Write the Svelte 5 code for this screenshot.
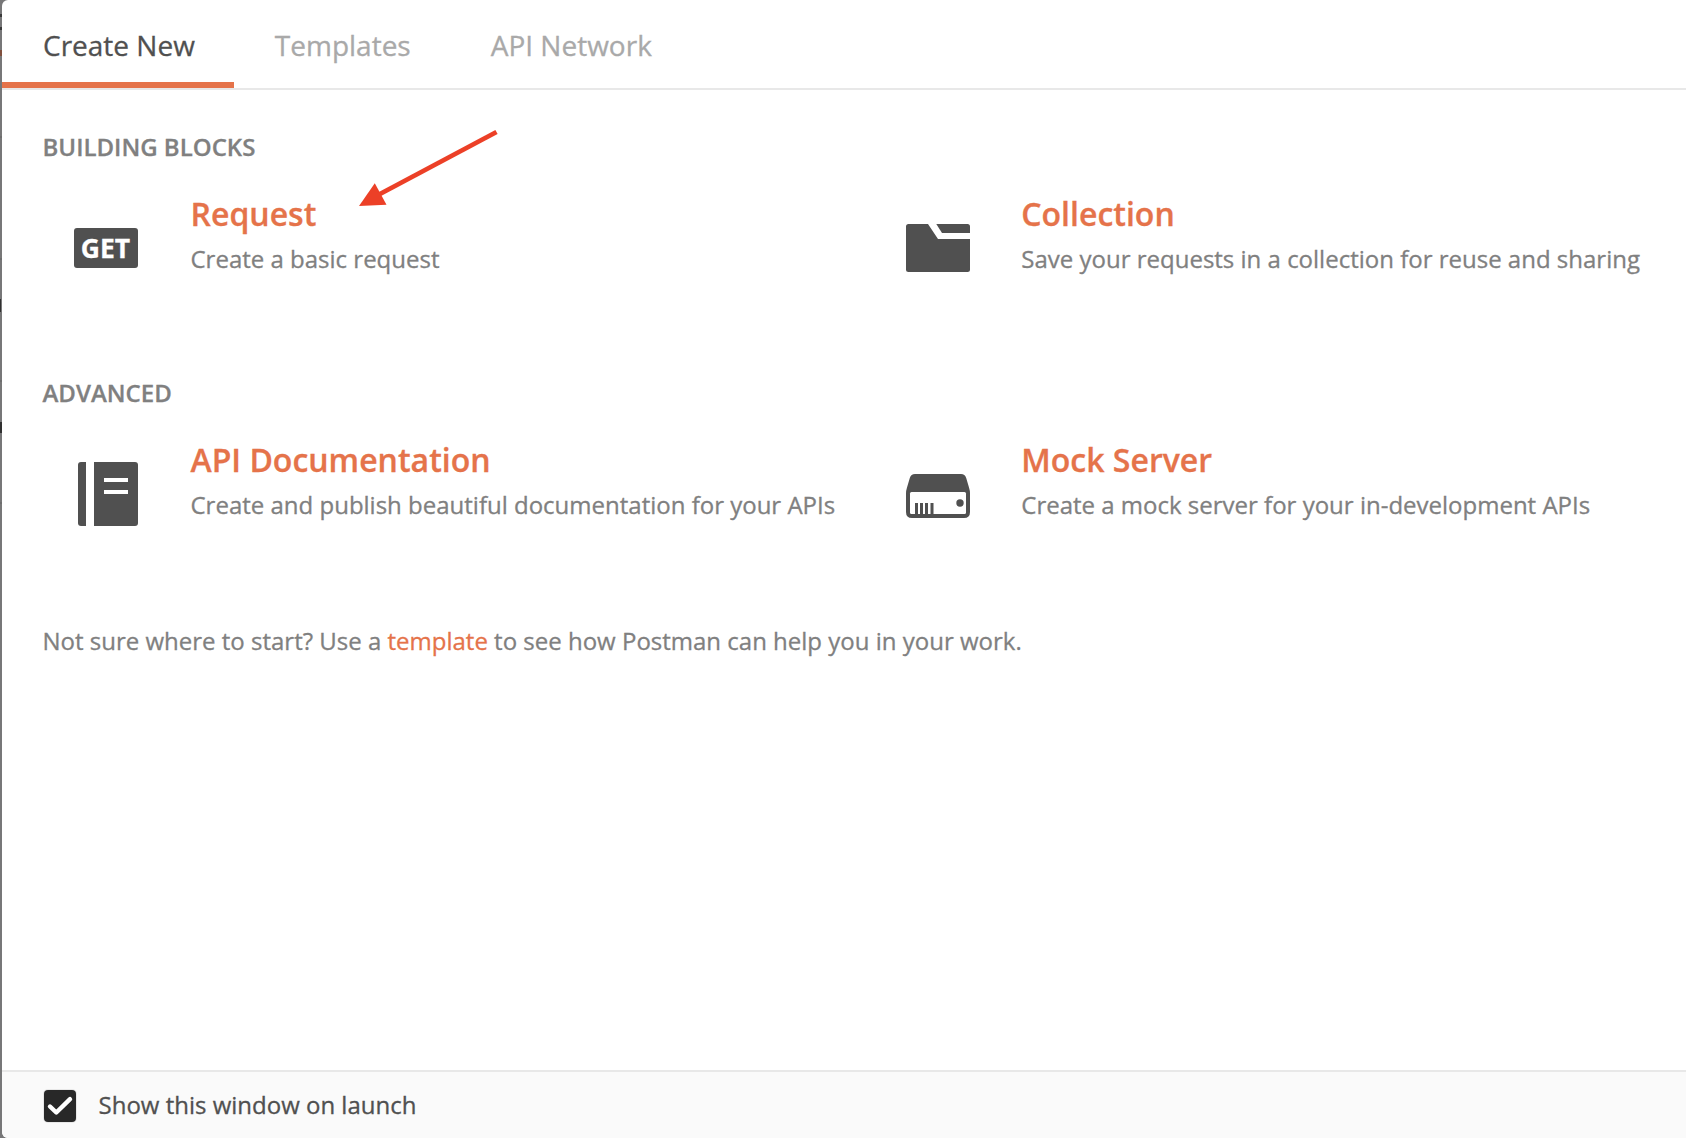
<script>
  const tabs = ['Create New', 'Templates', 'API Network'];
  let active = $state('Create New');
  let showOnLaunch = $state(true);

  const sections = [
    {
      heading: 'BUILDING BLOCKS',
      items: [
        { icon: 'get', title: 'Request', text: 'Create a basic request' },
        { icon: 'folder', title: 'Collection', text: 'Save your requests in a collection for reuse and sharing' }
      ]
    },
    {
      heading: 'ADVANCED',
      items: [
        { icon: 'book', title: 'API Documentation', text: 'Create and publish beautiful documentation for your APIs' },
        { icon: 'server', title: 'Mock Server', text: 'Create a mock server for your in-development APIs' }
      ]
    }
  ];
</script>

<div class="backdrop">
  <svg class="behind" width="6" height="1138" viewBox="0 0 6 1138" aria-hidden="true">
    <path d="M0 14h2v3H0zM0 27h2v3H0z" fill="#3a3a3a" />
    <path d="M0 50h3v6H0z" fill="#80503e" />
    <path d="M0 299h1v13H0zM0 422h2v11H0z" fill="#303030" />
    <path d="M0 136h2v2H0zM0 258h2v2H0zM0 380h2v2H0zM0 502h2v2H0z" fill="#6d6d6e" />
  </svg>
  <div class="modal">
    <nav class="tabs">
      {#each tabs as tab}
        <button class="tab" class:active={tab === active} onclick={() => (active = tab)}>{tab}</button>
      {/each}
    </nav>

    <main class="content">
      {#each sections as section}
        <section>
          <h2>{section.heading}</h2>
          <div class="cards">
            {#each section.items as item}
              <div class="card">
                <div class="icon">
                  {#if item.icon === 'get'}
                    <span class="get">GET</span>
                  {:else if item.icon === 'folder'}
                    <svg width="64" height="64" viewBox="0 0 64 64" fill="#505050">
                      <path d="M2.500 8H22l10 15h32v30.500a2.500 2.500 0 0 1-2.500 2.500h-59A2.500 2.500 0 0 1 0 53.500v-43A2.500 2.500 0 0 1 2.500 8z" />
                      <path d="M30.300 8h31.200a2.500 2.500 0 0 1 2.500 2.500V17H36z" />
                    </svg>
                  {:else if item.icon === 'book'}
                    <svg width="64" height="64" viewBox="0 0 64 64" fill="#505050">
                      <path d="M7 0h5v64H7a3 3 0 0 1-3-3V3a3 3 0 0 1 3-3z" />
                      <path d="M20 0h41a3 3 0 0 1 3 3v58a3 3 0 0 1-3 3H20z" />
                      <path d="M30 16h24v4H30zM30 28h24v4H30z" fill="#fff" />
                    </svg>
                  {:else}
                    <svg width="64" height="64" viewBox="0 0 64 64" fill="#505050">
                      <path d="M9 12h46q4 0 5.200 4L63 25.500q1 3 1 6V50q0 6-6 6H6q-6 0-6-6V31.500q0-3 1-6L3.800 16Q5 12 9 12z" />
                      <path d="M5.500 30h53q1.500 0 1.500 1.500v19q0 1.500-1.500 1.500h-53Q4 52 4 50.500v-19Q4 30 5.500 30z" fill="#fff" />
                      <path d="M9 41h3v11H9zM14 41h3v11h-3zM19 41h3v11h-3zM24.500 41h3v11h-3z" />
                      <circle cx="54" cy="41" r="3.700" />
                    </svg>
                  {/if}
                </div>
                <div class="info">
                  <h3>{item.title}</h3>
                  <p>{item.text}</p>
                </div>
              </div>
            {/each}
          </div>
        </section>
      {/each}
      <p class="hint">
        Not sure where to start? Use a <span class="link">template</span> to see how Postman can help you in your work.
      </p>
      <svg class="arrow" width="142" height="78" viewBox="0 0 142 78" fill="#ec4027" aria-hidden="true">
        <path d="M139.500 4L22 66.500" fill="none" stroke="#ec4027" stroke-width="4.800" />
        <path d="M2 78L17.800 55.300l11.700 21.500z" />
      </svg>
    </main>

    <footer>
      <button class="check" role="checkbox" aria-checked={showOnLaunch} aria-label="Show this window on launch" onclick={() => (showOnLaunch = !showOnLaunch)}>
        {#if showOnLaunch}
          <svg width="32" height="32" viewBox="0 0 32 32" fill="none" stroke="#fff" stroke-width="4.400" stroke-linecap="round" stroke-linejoin="round">
            <path d="M6 16.500L12.300 22.500L26 9.200" />
          </svg>
        {/if}
      </button>
      <span class="label">Show this window on launch</span>
    </footer>
  </div>
</div>

<style>
  :global(body) {
    margin: 0;
    overflow: hidden;
  }
  .backdrop {
    position: relative;
    box-sizing: border-box;
    height: 1138px;
    padding-left: 2px;
    background: #777778;
    font-family: 'Open Sans', sans-serif;
    font-size: 24px;
    line-height: 36px;
    color: #808080;
    -webkit-text-stroke: 0.3px currentColor;
  }
  .behind {
    position: absolute;
    left: 0;
    top: 0;
  }
  .modal {
    position: relative;
    display: flex;
    flex-direction: column;
    height: 100%;
    background: #fff;
    border-radius: 6px 0 0 6px;
    overflow: hidden;
  }
  .tabs {
    display: flex;
    flex: none;
    height: 88px;
    border-bottom: 2px solid #e8e8e8;
  }
  button {
    border: 0;
    background: none;
    font: inherit;
    cursor: pointer;
  }
  .tab {
    box-sizing: border-box;
    padding: 8px 39px 0 41px;
    border-bottom: 6px solid transparent;
    font-size: 28px;
    line-height: 74px;
    white-space: nowrap;
    color: #a9a9a9;
  }
  .tab.active {
    border-bottom-color: #e5734a;
    color: #505050;
  }
  .content {
    position: relative;
    flex: 1;
    padding: 39px 0 0 40.500px;
  }
  section {
    height: 246px;
  }
  h2,
  h3,
  p {
    margin: 0;
  }
  h2 {
    font-size: 24px;
    font-weight: 600;
    line-height: 36px;
  }
  .cards {
    display: grid;
    grid-template-columns: 832px 1fr;
    margin-left: -0.500px;
    padding-top: 27px;
  }
  .card {
    display: flex;
    gap: 52.500px;
    padding-left: 32px;
  }
  .card:last-child {
    gap: 51.300px;
  }
  .icon {
    display: flex;
    align-items: center;
    flex: none;
    width: 64px;
    height: 64px;
    margin-top: 24px;
  }
  .get {
    box-sizing: border-box;
    width: 64px;
    height: 40px;
    padding-right: 1px;
    border-radius: 3px;
    background: #505050;
    color: #fff;
    font-size: 26.500px;
    font-weight: 700;
    line-height: 40px;
    text-align: center;
  }
  .info {
    white-space: nowrap;
  }
  h3 {
    margin-bottom: 5px;
    font-size: 32px;
    font-weight: 600;
    line-height: 44px;
    color: #e5734a;
  }
  .hint {
    padding-top: 2px;
  }
  .link {
    color: #e5734a;
  }
  .arrow {
    position: absolute;
    left: 355px;
    top: 38px;
  }
  footer {
    display: flex;
    align-items: center;
    flex: none;
    gap: 22.500px;
    box-sizing: border-box;
    height: 68px;
    padding: 2px 0 0 42px;
    border-top: 2px solid #e8e8e8;
    background: #fafafa;
    color: #505050;
  }
  .label {
    padding-bottom: 2px;
  }
  .check {
    width: 32px;
    height: 32px;
    padding: 0;
    border-radius: 4px;
    background: #282828;
    box-shadow: 0 0 0 1px #e8e8e8;
  }
  .check svg {
    display: block;
  }
</style>
